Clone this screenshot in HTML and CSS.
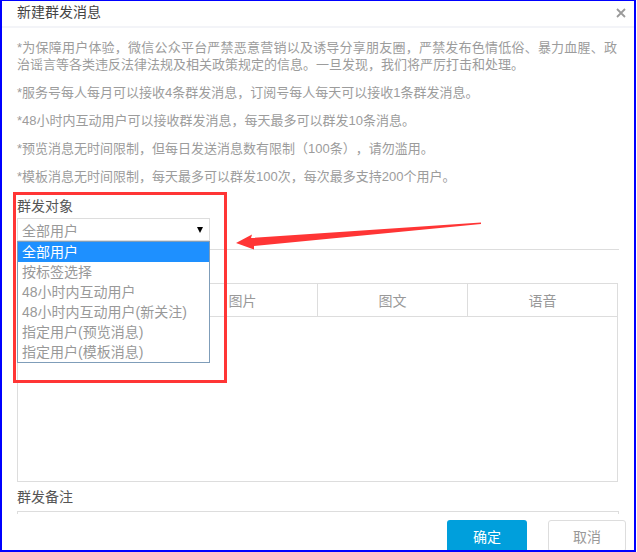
FILE: index.html
```html
<!DOCTYPE html>
<html lang="zh-CN">
<head>
<meta charset="utf-8">
<title>新建群发消息</title>
<link rel="stylesheet" href="styles.css">
</head>
<body>
<div class="dialog">
  <div class="header">
    <span class="title">新建群发消息</span>
    <svg class="close" width="10" height="10" viewBox="0 0 10 10"><path d="M1 1L9 9M9 1L1 9" stroke="#9a9a9a" stroke-width="1.8" fill="none"/></svg>
  </div>
  <div class="content">
    <div class="notices">
      <p>*为保障用户体验，微信公众平台严禁恶意营销以及诱导分享朋友圈，严禁发布色情低俗、暴力血腥、政治谣言等各类违反法律法规及相关政策规定的信息。一旦发现，我们将严厉打击和处理。</p>
      <p>*服务号每人每月可以接收4条群发消息，订阅号每人每天可以接收1条群发消息。</p>
      <p>*48小时内互动用户可以接收群发消息，每天最多可以群发10条消息。</p>
      <p>*预览消息无时间限制，但每日发送消息数有限制（100条），请勿滥用。</p>
      <p>*模板消息无时间限制，每天最多可以群发100次，每次最多支持200个用户。</p>
    </div>
    <div class="label">群发对象</div>
    <div class="select"><span>全部用户</span><span class="caret"></span></div>
    <div class="divider"></div>
    <div class="editor">
      <div class="tabs">
        <div class="tab"></div>
        <div class="tab">图片</div>
        <div class="tab">图文</div>
        <div class="tab">语音</div>
      </div>
    </div>
    <div class="label remark">群发备注</div>
    <div class="remark-box"></div>
    <div class="footer">
      <div class="btn btn-primary">确定</div>
      <div class="btn btn-default">取消</div>
    </div>
  </div>

  <div class="dropdown">
    <div class="option active">全部用户</div>
    <div class="option">按标签选择</div>
    <div class="option">48小时内互动用户</div>
    <div class="option">48小时内互动用户(新关注)</div>
    <div class="option">指定用户(预览消息)</div>
    <div class="option">指定用户(模板消息)</div>
  </div>
  <div class="highlight"></div>
  <svg class="arrow" width="260" height="45" viewBox="0 0 260 45">
    <polygon points="6,28 22,19.5 21,23 251,7.5 251,9 24,31 24,34.5" fill="#ff3535"/>
  </svg>
</div>
</body>
</html>
```
FILE: styles.css
```css
* { box-sizing: border-box; }
body {
  margin: 0;
  background: #fff;
  font-family: "Liberation Sans", "Noto Sans CJK SC", sans-serif;
  text-spacing-trim: space-all;
}
.dialog {
  position: relative;
  width: 636px;
  height: 552px;
  border: 2px solid #0000ff;
  border-top-width: 1px;
  overflow: hidden;
  background: #fff;
}
.header {
  height: 27px;
  display: flex;
  justify-content: space-between;
  align-items: flex-start;
  padding: 0 8px 0 15px;
  border-bottom: 2px solid #f3f4f8;
}
.title {
  font-size: 14px;
  line-height: 22px;
  color: #444;
}
.close { margin-top: 7px; }
.content {
  padding: 10.5px 0 0 15px;
}
.notices {
  width: 600px;
  font-size: 13px;
  line-height: 17px;
  color: #9c9c9c;
  text-align: justify;
}
.notices p { margin: 0 0 11px; }
.notices p:last-child { margin-bottom: 0; }
.label {
  margin-top: 12.5px;
  font-size: 14px;
  line-height: 18px;
  color: #555;
}
.select {
  margin-top: 3px;
  width: 193px;
  height: 23px;
  border: 1px solid #ddd;
  display: flex;
  align-items: center;
  justify-content: space-between;
  padding: 0 6px 0 4px;
  font-size: 14px;
  color: #999;
}
.caret {
  width: 0;
  height: 0;
  border-left: 3.5px solid transparent;
  border-right: 3.5px solid transparent;
  border-top: 6px solid #000;
}
.divider {
  margin-top: 8px;
  width: 602px;
  border-top: 1px solid #ddd;
}
.editor {
  margin-top: 33px;
  width: 601px;
  height: 199px;
  border: 1px solid #ddd;
}
.tabs {
  display: flex;
  height: 33px;
  border-bottom: 1px solid #ddd;
}
.tab {
  flex: 1;
  display: flex;
  align-items: center;
  justify-content: center;
  font-size: 14px;
  color: #999;
  border-left: 1px solid #ddd;
}
.tab:first-child { border-left: none; }
.label.remark { margin-top: 6px; }
.remark-box {
  margin-top: 5px;
  width: 602px;
  height: 3px;
  border: 1px solid #ddd;
  border-bottom: none;
}
.footer {
  display: flex;
  justify-content: flex-end;
  gap: 21px;
  padding: 6px 8px 0 0;
}
.btn {
  height: 32px;
  border-radius: 3px;
  font-size: 14px;
  display: flex;
  align-items: center;
  justify-content: center;
}
.btn-primary {
  width: 80px;
  background: #009fdc;
  color: #fff;
}
.btn-default {
  width: 78px;
  border: 1px solid #ddd;
  color: #999;
  background: #fff;
}
.dropdown {
  position: absolute;
  left: 15px;
  top: 240px;
  width: 193px;
  height: 122px;
  border: 1px solid #7f9db9;
  background: #fff;
}
.option {
  height: 20px;
  line-height: 20px;
  padding-left: 4px;
  font-size: 14px;
  color: #999;
  white-space: nowrap;
}
.option.active {
  background: #1e90ff;
  color: #fff;
}
.highlight {
  position: absolute;
  left: 11px;
  top: 191px;
  width: 214px;
  height: 191px;
  border: 3px solid #ff3535;
}
.arrow {
  position: absolute;
  left: 228px;
  top: 214px;
}
```
